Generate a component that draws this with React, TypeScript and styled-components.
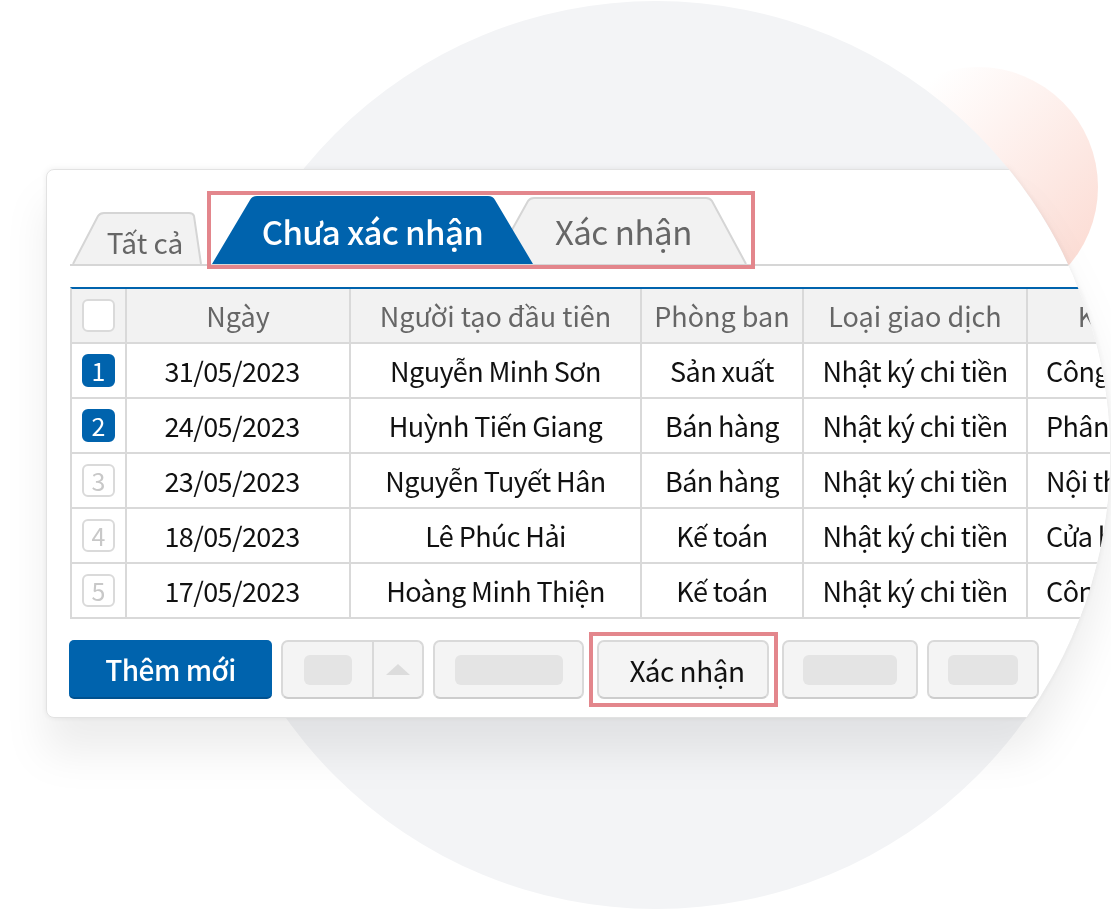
import React from "react";
import styled, { createGlobalStyle } from "styled-components";

const FONT = `"Noto Sans CJK KR", "Noto Sans", "Liberation Sans", sans-serif`;

const GlobalStyle = createGlobalStyle`
  html, body { margin: 0; padding: 0; background: #fff; }
  body { font-family: ${FONT}; }
  *, *::before, *::after { box-sizing: border-box; }
`;

const Scene = styled.div`
  position: relative;
  width: 1111px;
  height: 910px;
  overflow: hidden;
  background: #fff;
  padding: 169px 0 0 46px;
  &::before {
    content: "";
    position: absolute;
    left: 858px;
    top: 67px;
    width: 240px;
    height: 240px;
    border-radius: 50%;
    background: linear-gradient(135deg, rgba(253, 230, 224, 0) 18%, #fcdcd4 88%);
  }
  &::after {
    content: "";
    position: absolute;
    left: 202px;
    top: 1px;
    width: 908px;
    height: 908px;
    border-radius: 50%;
    background: #f3f4f6;
  }
`;

const CardShadow = styled.div`
  position: relative;
  z-index: 1;
  width: 1065px;
  filter: drop-shadow(0 0 3px rgba(0, 0, 0, 0.07)) drop-shadow(0 35px 20px rgba(0, 0, 0, 0.07));
`;

const Card = styled.div`
  height: 549px;
  background: #fff;
  border: 1px solid #e2e2e2;
  border-radius: 8px;
  padding: 21px 0 18px 23px;
  overflow: hidden;
  clip-path: path("M0 0 H962.6 A454 454 0 0 1 980.1 549 H0 Z");
  display: flex;
  flex-direction: column;
`;

const TabStrip = styled.div`
  position: relative;
  height: 75px;
  display: flex;
  align-items: flex-end;
  border-bottom: 2px solid #d6d6d6;
  padding-left: 2px;
`;

const Tab = styled.div<{ $w: number; $h: number; $ml?: number; $z?: number }>`
  position: relative;
  z-index: ${(p) => p.$z ?? 1};
  width: ${(p) => p.$w}px;
  height: ${(p) => p.$h}px;
  margin-left: ${(p) => p.$ml ?? 0}px;
  display: grid;
  flex: none;
  & > svg {
    grid-area: 1 / 1;
    width: 100%;
    height: 100%;
    display: block;
  }
`;

const TabLabel = styled.span<{ $active?: boolean; $size: number; $ls?: number; $pl?: number; $pt?: number }>`
  grid-area: 1 / 1;
  align-self: center;
  justify-self: center;
  padding-left: ${(p) => p.$pl ?? 0}px;
  padding-top: ${(p) => p.$pt ?? 0}px;
  font-size: ${(p) => p.$size}px;
  letter-spacing: ${(p) => p.$ls ?? 0}px;
  font-weight: ${(p) => (p.$active ? 500 : 400)};
  color: ${(p) => (p.$active ? "#ffffff" : "#666666")};
  white-space: nowrap;
  line-height: 1;
`;

const Highlight = styled.div<{ $l: number; $t: number; $w: number; $h: number }>`
  position: absolute;
  left: ${(p) => p.$l}px;
  top: ${(p) => p.$t}px;
  width: ${(p) => p.$w}px;
  height: ${(p) => p.$h}px;
  border: 4px solid #e3868c;
  z-index: 5;
  pointer-events: none;
`;

const Table = styled.div`
  margin-top: 21px;
  align-self: flex-start;
  display: grid;
  grid-template-columns: 55px 224px 291px 162px 224px 250px;
  grid-auto-rows: 55px;
  border-top: 2px solid #0063ad;
  border-left: 2px solid #d9d9d9;
  width: max-content;
  flex: none;
`;

const Cell = styled.div<{ $head?: boolean; $left?: boolean; $pr?: number }>`
  border-right: 2px solid #d9d9d9;
  border-bottom: 2px solid #d9d9d9;
  display: flex;
  align-items: center;
  justify-content: ${(p) => (p.$left ? "flex-start" : "center")};
  padding-left: ${(p) => (p.$left ? 18 : 0)}px;
  padding-right: ${(p) => p.$pr ?? 0}px;
  background: ${(p) => (p.$head ? "#f2f2f2" : "#ffffff")};
  color: ${(p) => (p.$head ? "#666666" : "#111111")};
  font-size: 27px;
  letter-spacing: ${(p) => (p.$head ? 0 : -0.6)}px;
  white-space: nowrap;
  overflow: hidden;
  line-height: 1;
`;

const Check = styled.div<{ $on?: boolean }>`
  width: 33px;
  height: 33px;
  border-radius: 6px;
  border: 2px solid ${(p) => (p.$on ? "#0063ad" : "#dadada")};
  background: ${(p) => (p.$on ? "#0063ad" : "#ffffff")};
  color: ${(p) => (p.$on ? "#ffffff" : "#c8c8c8")};
  font-size: 25px;
  letter-spacing: 0;
  display: flex;
  align-items: center;
  justify-content: center;
  line-height: 1;
`;

const Actions = styled.div`
  margin-top: 21px;
  margin-left: -1px;
  display: flex;
  gap: 9px;
  height: 59px;
  flex: none;
`;

const PrimaryButton = styled.button`
  width: 203px;
  height: 59px;
  border: none;
  border-bottom: 2px solid #00518f;
  border-radius: 5px;
  background: #0063ad;
  color: #fff;
  font-family: ${FONT};
  font-size: 28px;
  font-weight: 500;
  letter-spacing: -0.5px;
  padding: 0;
  line-height: 1;
`;

const GreyButton = styled.div<{ $w: number }>`
  position: relative;
  width: ${(p) => p.$w}px;
  height: 59px;
  border: 2px solid #d9d9d9;
  border-bottom-color: #cdcdcd;
  border-radius: 7px;
  background: #f4f4f4;
  display: flex;
  align-items: center;
  justify-content: center;
  flex: none;
`;

const SplitButton = styled(GreyButton)`
  justify-content: flex-start;
`;

const SplitPart = styled.div<{ $w?: number; $divider?: boolean }>`
  height: 100%;
  width: ${(p) => (p.$w ? `${p.$w}px` : "auto")};
  flex: ${(p) => (p.$w ? "none" : "1")};
  display: flex;
  align-items: center;
  justify-content: center;
  border-right: ${(p) => (p.$divider ? "2px solid #d9d9d9" : "none")};
`;

const Placeholder = styled.div<{ $w: number }>`
  width: ${(p) => p.$w}px;
  height: 30px;
  border-radius: 6px;
  background: #e4e4e4;
`;

const UpArrow = styled.div`
  width: 0;
  height: 0;
  border-left: 12px solid transparent;
  border-right: 12px solid transparent;
  border-bottom: 11px solid #dcdcdc;
`;

const ConfirmButton = styled(GreyButton)`
  margin: 0 4px;
  padding-left: 8px;
  font-size: 28px;
  letter-spacing: -0.5px;
  color: #111;
  line-height: 1;
  white-space: nowrap;
  &::after {
    content: "";
    position: absolute;
    left: -10px;
    top: -10px;
    right: -11px;
    bottom: -10px;
    border: 4px solid #e3868c;
    pointer-events: none;
  }
`;

const headers = ["Ngày", "Người tạo đầu tiên", "Phòng ban", "Loại giao dịch", "Khách hàng"];

const rows = [
  ["31/05/2023", "Nguyễn Minh Sơn", "Sản xuất", "Nhật ký chi tiền", "Công ty TNHH An Phát"],
  ["24/05/2023", "Huỳnh Tiến Giang", "Bán hàng", "Nhật ký chi tiền", "Phân phối Minh Long"],
  ["23/05/2023", "Nguyễn Tuyết Hân", "Bán hàng", "Nhật ký chi tiền", "Nội thất Hòa Phát"],
  ["18/05/2023", "Lê Phúc Hải", "Kế toán", "Nhật ký chi tiền", "Cửa hàng Thanh Bình"],
  ["17/05/2023", "Hoàng Minh Thiện", "Kế toán", "Nhật ký chi tiền", "Công ty CP Sao Mai"],
];

export default function App() {
  return (
    <>
      <GlobalStyle />
      <Scene>
        <CardShadow>
          <Card>
            <TabStrip>
              <Tab $w={130} $h={52}>
                <svg viewBox="0 0 130 52">
                  <path
                    d="M1 52 L26 4 Q28 1 32 1 L117 1 Q121 1 122 4 L129 52"
                    fill="#f2f2f2"
                    stroke="#d5d5d5"
                    strokeWidth="2"
                  />
                </svg>
                <TabLabel $size={28} $pl={16} $pt={8}>
                  Tất cả
                </TabLabel>
              </Tab>
              <Tab $w={321} $h={68} $ml={10} $z={3}>
                <svg viewBox="0 0 321 68">
                  <path d="M0 68 L38 4 Q40 0 45 0 L276 0 Q281 0 283 4 L321 68 Z" fill="#0063ad" />
                </svg>
                <TabLabel $active $size={33} $ls={-0.6} $pt={2}>
                  Chưa xác nhận
                </TabLabel>
              </Tab>
              <Tab $w={255} $h={67} $ml={-41} $z={2}>
                <svg viewBox="0 0 255 67">
                  <path
                    d="M1 67 L36 4 Q38 1 42 1 L214 1 Q218 1 220 4 L254 67"
                    fill="#f2f2f2"
                    stroke="#d5d5d5"
                    strokeWidth="2"
                  />
                </svg>
                <TabLabel $size={33} $ls={-0.4} $pl={8} $pt={2}>
                  Xác nhận
                </TabLabel>
              </Tab>
              <Highlight $l={137} $t={0} $w={548} $h={78} />
            </TabStrip>

            <Table>
              <Cell $head>
                <Check />
              </Cell>
              {headers.map((h) => (
                <Cell $head key={h}>
                  {h}
                </Cell>
              ))}
              {rows.map((r, i) => (
                <React.Fragment key={i}>
                  <Cell>
                    <Check $on={i < 2}>{i + 1}</Check>
                  </Cell>
                  {r.map((v, j) => (
                    <Cell key={j} $left={j === 4} $pr={j === 0 ? 12 : 0}>
                      {v}
                    </Cell>
                  ))}
                </React.Fragment>
              ))}
            </Table>

            <Actions>
              <PrimaryButton>Thêm mới</PrimaryButton>
              <SplitButton $w={143}>
                <SplitPart $w={91} $divider>
                  <Placeholder $w={48} />
                </SplitPart>
                <SplitPart>
                  <UpArrow />
                </SplitPart>
              </SplitButton>
              <GreyButton $w={151}>
                <Placeholder $w={108} />
              </GreyButton>
              <ConfirmButton $w={172}>Xác nhận</ConfirmButton>
              <GreyButton $w={136}>
                <Placeholder $w={94} />
              </GreyButton>
              <GreyButton $w={112}>
                <Placeholder $w={70} />
              </GreyButton>
            </Actions>
          </Card>
        </CardShadow>
      </Scene>
    </>
  );
}
